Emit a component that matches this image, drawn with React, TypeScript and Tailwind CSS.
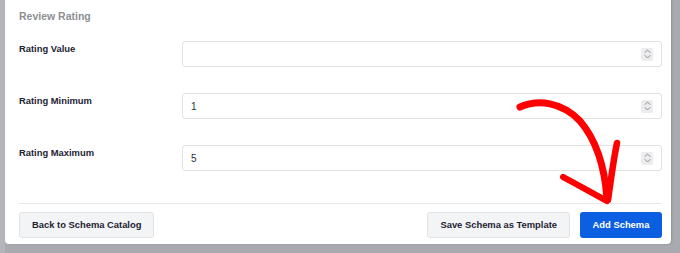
import React from "react";

const font = { fontFamily: '"Liberation Sans", Arial, sans-serif' };

function Spinner() {
  return (
    <span className="flex h-[13px] w-[12px] flex-col items-center justify-center rounded-[2px] bg-[#ececee]">
      <svg width="7" height="10" viewBox="0 0 7 10" fill="none" stroke="#8a8d92" strokeWidth="1" strokeLinecap="round" strokeLinejoin="round">
        <path d="M1 3.5 L3.5 1 L6 3.5" />
        <path d="M1 6.5 L3.5 9 L6 6.5" />
      </svg>
    </span>
  );
}

function NumberField({ label, value }: { label: string; value: string }) {
  return (
    <div className="flex items-start">
      <div className="w-[163px] shrink-0 pt-[1px] text-[9.4px] font-bold leading-[14px] text-[#1d2233]">{label}</div>
      <div className="flex h-[26px] flex-1 items-center justify-between rounded-[3px] border border-[#e1e2e4] bg-white pl-[8px] pr-[8px]">
        <span className="text-[10px] text-[#2c3338]">{value}</span>
        <Spinner />
      </div>
    </div>
  );
}

export default function App() {
  return (
    <div className="relative h-[253px] w-[680px] overflow-hidden bg-[#a8aab0]" style={font}>
      <div className="flex h-full">
        <div className="w-[5px] shrink-0 bg-[#b3b5ba]" />
        <div className="h-[244px] w-[666px] shrink-0 rounded-b-[4px] bg-white pl-[14px] pr-[9px] pt-[8px] pb-[8px] shadow-[1px_0_2px_rgba(0,0,0,0.15)]">
          <h3 className="mb-[17px] h-[16px] text-[10.5px] font-bold leading-[16px] text-[#8c8f94]">Review Rating</h3>
          <div className="flex flex-col gap-[26px]">
            <NumberField label="Rating Value" value="" />
            <NumberField label="Rating Minimum" value="1" />
            <NumberField label="Rating Maximum" value="5" />
          </div>
          <div className="mt-[32px] flex items-center justify-between border-t border-[#e6e7e9] pt-[8px]">
            <button className="h-[26px] rounded-[3px] border border-[#e1e2e4] bg-[#f3f4f6] px-[12px] text-[9.4px] font-bold text-[#1d2233]">
              Back to Schema Catalog
            </button>
            <div className="flex items-center gap-[10px]">
              <button className="h-[26px] rounded-[3px] border border-[#e1e2e4] bg-[#f3f4f6] px-[12px] text-[9.4px] font-bold text-[#1d2233]">
                Save Schema as Template
              </button>
              <button className="h-[26px] w-[82px] rounded-[3px] bg-[#0b5fe0] text-[9.4px] font-bold text-white">Add Schema</button>
            </div>
          </div>
        </div>
        <div className="flex-1" />
      </div>
      <svg className="pointer-events-none absolute left-0 top-0" width="680" height="253" viewBox="0 0 680 253" fill="none" stroke="#ff0000" strokeLinecap="round" strokeLinejoin="round">
        <path d="M520 107 C538 99 562 102 580 121 C598 142 605 170 607 199" strokeWidth="7" />
        <path d="M563 177 C580 186 594 194 607 201" strokeWidth="6" />
        <path d="M617 143 C613 162 611 180 608 200" strokeWidth="6.5" />
      </svg>
    </div>
  );
}
